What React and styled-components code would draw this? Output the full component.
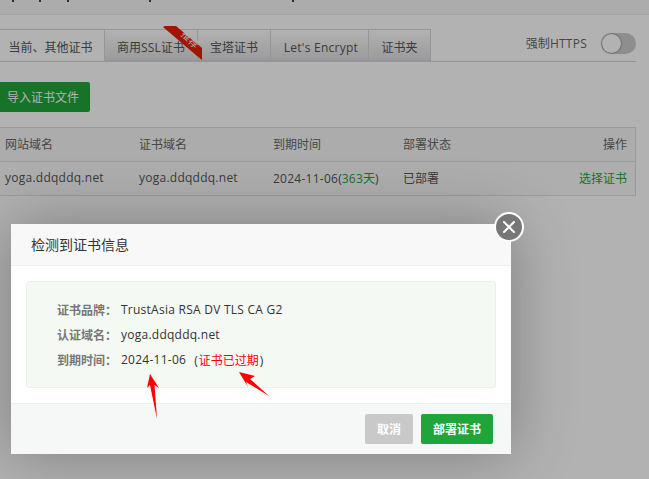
import styled, { createGlobalStyle } from 'styled-components';

const GlobalStyle = createGlobalStyle`
  html, body {
    margin: 0;
    padding: 0;
    background: #fff;
    overflow: hidden;
  }
  * {
    box-sizing: border-box;
  }
`;

const FONT = `"Open Sans", "Noto Sans CJK SC", sans-serif`;

const Page = styled.div`
  position: relative;
  width: 649px;
  height: 479px;
  overflow: hidden;
  font-family: ${FONT};
  font-size: 12px;
  color: #555;
`;

const TopBar = styled.div`
  display: flex;
  align-items: flex-start;
  height: 15px;
  background: #f7f7f7;
  border-bottom: 1px solid #ececec;
`;

const Speck = styled.i`
  width: 2px;
  height: 2px;
  margin-left: ${(p) => p.$gap}px;
  background: #444;
`;

const Content = styled.div`
  padding-top: 15px;
`;

const TabRow = styled.div`
  display: flex;
  align-items: flex-end;
  justify-content: space-between;
  width: 636px;
  height: 32px;
  border-bottom: 1px solid #d4d4dc;
`;

const Tabs = styled.div`
  display: flex;
  height: 32px;
`;

const Tab = styled.div`
  position: relative;
  width: ${(p) => p.$w}px;
  height: 32px;
  display: flex;
  align-items: center;
  justify-content: center;
  padding: 4px ${(p) => (p.$active ? 3 : 0)}px 0 ${(p) => p.$shift || 0}px;
  white-space: nowrap;
  color: #555;
  border-top: 1px solid #d4d4dc;
  border-right: 1px solid #d4d4dc;
  border-bottom: 1px solid ${(p) => (p.$active ? '#fff' : '#d4d4dc')};
  background: ${(p) => (p.$active ? '#fff' : 'linear-gradient(#fff, #dedede)')};
`;

const Ribbon = styled.svg`
  position: absolute;
  z-index: 1;
  top: -4px;
  right: -5px;
  width: 39px;
  height: 34px;
`;

const RibbonText = styled.span`
  position: absolute;
  z-index: 2;
  top: 4px;
  right: -3px;
  font-size: 10px;
  line-height: 11px;
  color: #fff;
  transform: rotate(45deg);
`;

const Latin = styled.span`
  letter-spacing: 0.25px;
`;

const HttpsBox = styled.div`
  display: flex;
  align-items: center;
  gap: 14px;
  height: 24px;
  margin-bottom: 6px;
  color: #666;
`;

const Toggle = styled.div`
  width: 35px;
  height: 21px;
  padding: 1px;
  border-radius: 11px;
  background: #ccc;
`;

const Knob = styled.div`
  width: 19px;
  height: 19px;
  border-radius: 50%;
  background: #fff;
  box-shadow: 0 0 2px rgba(0, 0, 0, 0.6);
`;

const ImportButton = styled.div`
  width: 90px;
  height: 30px;
  margin-top: 20px;
  padding-left: 7px;
  display: flex;
  align-items: center;
  color: #fff;
  background: #20a53a;
  border-radius: 0 2px 2px 0;
`;

const Table = styled.div`
  width: 636px;
  margin-top: 15px;
  border-top: 1px solid #ddd;
  border-right: 1px solid #ddd;
  border-bottom: 1px solid #ddd;
`;

const Row = styled.div`
  display: grid;
  grid-template-columns: 134px 134px 130px 1fr auto;
  align-items: center;
  height: ${(p) => (p.$head ? 34 : 33)}px;
  padding: 0 8px 2px 5px;
  color: ${(p) => (p.$head ? '#666' : '#555')};
  background: ${(p) => (p.$head ? '#f6f6f6' : '#fafafa')};
  border-bottom: ${(p) => (p.$head ? '1px solid #ddd' : '0')};
`;

const Green = styled.span`
  color: #20a53a;
`;

const Dim = styled.div`
  position: absolute;
  z-index: 3;
  inset: 0;
  background: rgba(0, 0, 0, 0.3);
`;

const Modal = styled.div`
  position: absolute;
  z-index: 4;
  left: 11px;
  top: 224px;
  width: 500px;
  height: 230px;
  display: flex;
  flex-direction: column;
  background: #fff;
  box-shadow: 0 0 60px rgba(0, 0, 0, 0.3);
`;

const ModalTitle = styled.div`
  height: 42px;
  padding: 0 20px 2px;
  display: flex;
  align-items: center;
  font-size: 14px;
  color: #333;
  background: #f8f8f8;
  border-bottom: 1px solid #eee;
`;

const ModalBody = styled.div`
  flex: 1;
  padding: 15px 15px 0;
`;

const InfoBox = styled.div`
  position: relative;
  height: 107px;
  padding: 15px 0 0 30px;
  background: #f5f9f3;
  border: 1px solid #ebf0ea;
  border-radius: 3px;
`;

const InfoRow = styled.div`
  display: flex;
  align-items: center;
  height: 25px;
  color: #333;
`;

const InfoLabel = styled.span`
  width: 64px;
  font-weight: 700;
  color: #777;
`;

const Expired = styled.span`
  margin-left: 8px;
  color: #333;
`;

const Red = styled.span`
  margin: 0 1px;
  color: #f00;
`;

const Arrow = styled.svg`
  position: absolute;
  overflow: visible;
  left: 0;
  top: 0;
  width: 10px;
  height: 10px;
`;

const ModalFooter = styled.div`
  height: 51px;
  padding: 10px 18px 0 0;
  display: flex;
  justify-content: flex-end;
  gap: 8px;
  background: #f6f8f8;
  border-top: 1px solid #eee;
`;

const FooterButton = styled.div`
  width: ${(p) => p.$w}px;
  height: 30px;
  display: flex;
  align-items: center;
  justify-content: center;
  font-weight: 700;
  color: #fff;
  border-radius: 2px;
  background: ${(p) => (p.$primary ? '#20a53a' : '#c9c9c9')};
`;

const CloseButton = styled.div`
  position: absolute;
  right: -13px;
  top: -12px;
  width: 30px;
  height: 30px;
  display: flex;
  align-items: center;
  justify-content: center;
  background: #777;
  border: 2px solid #fff;
  border-radius: 50%;
`;

export default function App() {
  return (
    <Page>
      <GlobalStyle />
      <TopBar>
        <Speck $gap={12} />
        <Speck $gap={25} />
        <Speck $gap={26} />
        <Speck $gap={80} />
        <Speck $gap={141} />
      </TopBar>
      <Content>
        <TabRow>
          <Tabs>
            <Tab $active $w={105}>当前、其他证书</Tab>
            <Tab $w={93}>
              商用<Latin>SSL</Latin>证书
              <Ribbon viewBox="0 0 39 34">
                <path d="M0 1 L2 0 L13 0 L39 22 L39 34 L34 30 Z" fill="#e81c00" />
              </Ribbon>
              <RibbonText>推荐</RibbonText>
            </Tab>
            <Tab $w={73}>宝塔证书</Tab>
            <Tab $w={98} $shift={3}><Latin>Let's Encrypt</Latin></Tab>
            <Tab $w={62}>证书夹</Tab>
          </Tabs>
          <HttpsBox>
            <span>强制<Latin>HTTPS</Latin></span>
            <Toggle>
              <Knob />
            </Toggle>
          </HttpsBox>
        </TabRow>
        <ImportButton>导入证书文件</ImportButton>
        <Table>
          <Row $head>
            <span>网站域名</span>
            <span>证书域名</span>
            <span>到期时间</span>
            <span>部署状态</span>
            <span>操作</span>
          </Row>
          <Row>
            <Latin>yoga.ddqddq.net</Latin>
            <Latin>yoga.ddqddq.net</Latin>
            <span><Latin>2024-11-06</Latin>(<Green><Latin>363</Latin>天</Green>)</span>
            <span>已部署</span>
            <Green>选择证书</Green>
          </Row>
        </Table>
      </Content>
      <Dim />
      <Modal>
        <ModalTitle>检测到证书信息</ModalTitle>
        <ModalBody>
          <InfoBox>
            <InfoRow>
              <InfoLabel>证书品牌：</InfoLabel>
              <Latin>TrustAsia RSA DV TLS CA G2</Latin>
            </InfoRow>
            <InfoRow>
              <InfoLabel>认证域名：</InfoLabel>
              <Latin>yoga.ddqddq.net</Latin>
            </InfoRow>
            <InfoRow>
              <InfoLabel>到期时间：</InfoLabel>
              <Latin>2024-11-06</Latin>
              <Expired>(<Red>证书已过期</Red>)</Expired>
            </InfoRow>
            <Arrow>
              <path d="M123 92 L132 106 L127.5 103 L130 137 L123 103 L120 106 Z" fill="#f00" />
              <path d="M212 90 L228 94 L223 97 L242 114 L219 100 L221 105 Z" fill="#f00" />
            </Arrow>
          </InfoBox>
        </ModalBody>
        <ModalFooter>
          <FooterButton $w={48}>取消</FooterButton>
          <FooterButton $primary $w={72}>部署证书</FooterButton>
        </ModalFooter>
        <CloseButton>
          <svg width="14" height="14" viewBox="0 0 14 14">
            <path d="M2 2 L12 12 M12 2 L2 12" stroke="#fff" strokeWidth="2" strokeLinecap="round" />
          </svg>
        </CloseButton>
      </Modal>
    </Page>
  );
}
